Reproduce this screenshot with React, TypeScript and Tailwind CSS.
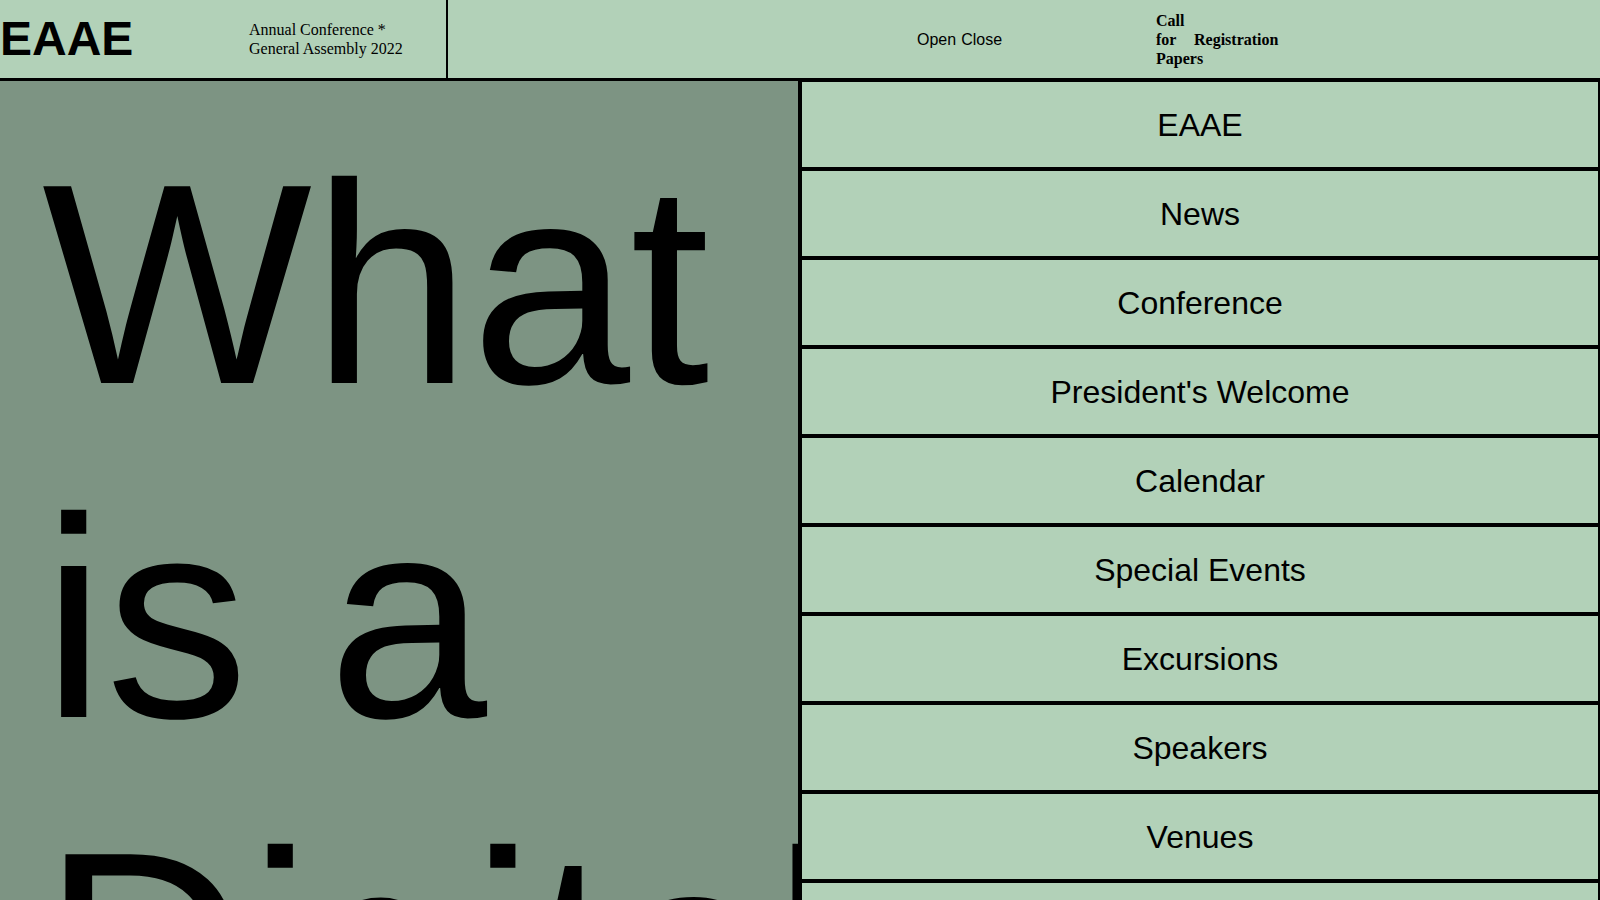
import React from "react";

const items = [
  "EAAE",
  "News",
  "Conference",
  "President's Welcome",
  "Calendar",
  "Special Events",
  "Excursions",
  "Speakers",
  "Venues",
  "Partners",
];

export default function App() {
  return (
    <div
      className="relative w-[1600px] h-[900px] overflow-hidden bg-[#7d9483] text-black"
      style={{ fontFamily: '"Liberation Sans", Arial, sans-serif' }}
    >
      <header className="flex h-[81px] border-b-[3px] border-black bg-[#b2d1b8]">
        <div className="flex w-[448px] items-center border-r-2 border-black">
          <div className="w-[249px] text-[48px] font-bold leading-none">EAAE</div>
          <div
            className="text-[16px] leading-[19px]"
            style={{ fontFamily: '"Liberation Serif", "Times New Roman", serif' }}
          >
            Annual Conference *
            <br />
            General Assembly 2022
          </div>
        </div>
        <nav className="flex items-center pl-[469px]">
          <div className="flex w-[239px] gap-[5px] pt-[2px] text-[16px] leading-none">
            <span>Open</span>
            <span>Close</span>
          </div>
          <div
            className="flex items-center pt-[1px] text-[16px] font-bold leading-[19px]"
            style={{ fontFamily: '"Liberation Serif", "Times New Roman", serif' }}
          >
            <div className="w-[38px]">
              <div>Call</div>
              <div>for</div>
              <div className="whitespace-nowrap">Papers</div>
            </div>
            <div>Registration</div>
          </div>
        </nav>
      </header>

      <main className="w-[800px] pl-[42px] pt-[36px]">
        <h1 className="text-[286px] font-normal leading-[334px]">What is a Digital</h1>
      </main>

      <div className="absolute top-[80px] left-[798px] right-0 bottom-0 border-l-2 border-black">
        {items.map((t) => (
          <div
            key={t}
            className="flex h-[89px] items-center justify-center border-2 border-black bg-[#b2d1b8] pt-[1px] text-[32px] leading-none"
          >
            {t}
          </div>
        ))}
      </div>
    </div>
  );
}
